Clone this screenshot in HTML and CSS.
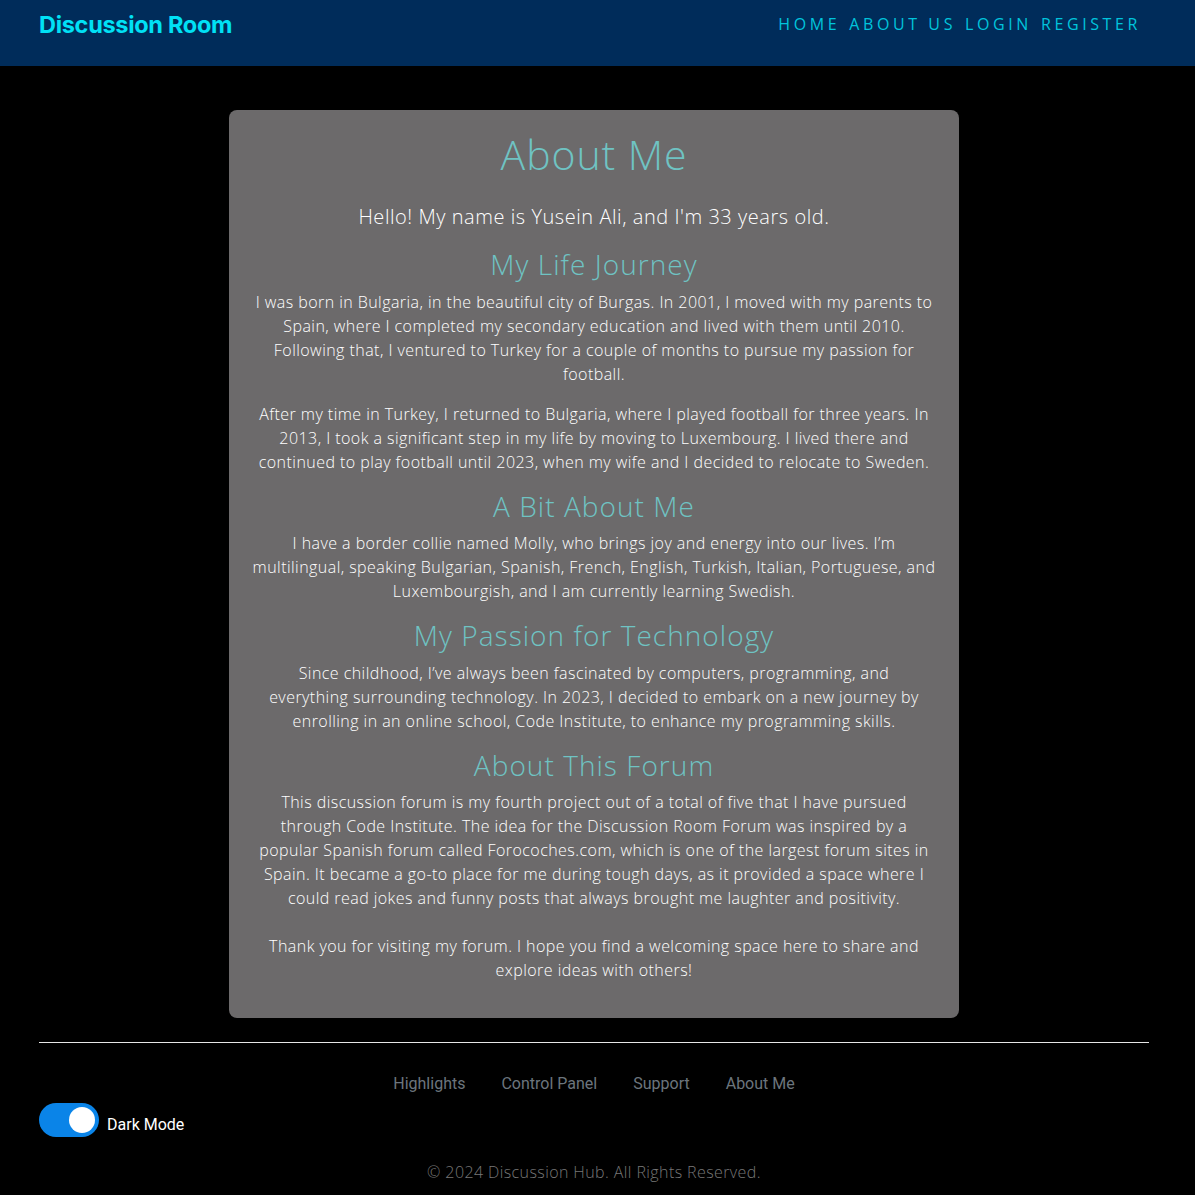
FILE: index.html
```html
<!DOCTYPE html>
<html lang="en">
<head>
<meta charset="utf-8">
<title>About Me - Discussion Room</title>
<link rel="stylesheet" href="styles.css">
</head>
<body>
<header class="topbar">
  <a class="brand" href="#">Discussion Room</a>
  <nav class="mainnav">
    <a href="#">HOME</a>
    <a href="#">ABOUT US</a>
    <a href="#">LOGIN</a>
    <a href="#">REGISTER</a>
  </nav>
</header>
<main class="page">
  <section class="card">
    <h1 class="title">About Me</h1>
    <p class="intro">Hello! My name is Yusein Ali, and I'm 33 years old.</p>
    <h2 class="sub">My Life Journey</h2>
    <p>I was born in Bulgaria, in the beautiful city of Burgas. In 2001, I moved with my parents to Spain, where I completed my secondary education and lived with them until 2010. Following that, I ventured to Turkey for a couple of months to pursue my passion for football.</p>
    <p>After my time in Turkey, I returned to Bulgaria, where I played football for three years. In 2013, I took a significant step in my life by moving to Luxembourg. I lived there and continued to play football until 2023, when my wife and I decided to relocate to Sweden.</p>
    <h2 class="sub">A Bit About Me</h2>
    <p>I have a border collie named Molly, who brings joy and energy into our lives. I’m multilingual, speaking Bulgarian, Spanish, French, English, Turkish, Italian, Portuguese, and Luxembourgish, and I am currently learning Swedish.</p>
    <h2 class="sub">My Passion for Technology</h2>
    <p>Since childhood, I’ve always been fascinated by computers, programming, and<br>everything surrounding technology. In 2023, I decided to embark on a new journey by enrolling in an online school, Code Institute, to enhance my programming skills.</p>
    <h2 class="sub">About This Forum</h2>
    <p>This discussion forum is my fourth project out of a total of five that I have pursued through Code Institute. The idea for the Discussion Room Forum was inspired by a popular Spanish forum called Forocoches.com, which is one of the largest forum sites in Spain. It became a go-to place for me during tough days, as it provided a space where I could read jokes and funny posts that always brought me laughter and positivity.<br><br>Thank you for visiting my forum. I hope you find a welcoming space here to share and explore ideas with others!</p>
  </section>
</main>
<footer class="footer">
  <hr class="rule">
  <ul class="footlinks">
    <li><a href="#">Highlights</a></li>
    <li><a href="#">Control Panel</a></li>
    <li><a href="#">Support</a></li>
    <li><a href="#">About Me</a></li>
  </ul>
  <label class="darkmode">
    <span class="switch"><span class="knob"></span></span>
    <span class="dmlabel">Dark Mode</span>
  </label>
  <p class="copy">© 2024 Discussion Hub. All Rights Reserved.</p>
</footer>
</body>
</html>
```
FILE: styles.css
```css
* { box-sizing: border-box; }
html, body { margin: 0; padding: 0; }
body {
  background: #000;
  font-family: "Open Sans", "Liberation Sans", sans-serif;
  font-weight: 300;
  color: #fff;
}
a { text-decoration: none; }

.topbar {
  height: 66px;
  background: #002c5a;
  display: flex;
  justify-content: space-between;
  align-items: flex-start;
  padding: 0 54px 0 39px;
}
.brand {
  font-family: Inter, "Liberation Sans", sans-serif;
  font-weight: 700;
  font-size: 23.5px;
  letter-spacing: -0.3px;
  color: #00e1f5;
  line-height: 24px;
  margin-top: 13px;
}
.mainnav {
  display: flex;
  gap: 9px;
  margin-top: 13px;
}
.mainnav a {
  color: #00c4dc;
  font-size: 16px;
  font-weight: 400;
  letter-spacing: 3.6px;
  line-height: 22px;
}

.page {
  padding: 44px 7px 24px 0;
  display: flex;
  justify-content: center;
}
.card {
  width: 730px;
  background: #6c6a6b;
  border-radius: 8px;
  padding: 20px 20px 20px;
  text-align: center;
}
.title {
  font-size: 41px;
  font-weight: 300;
  letter-spacing: 0.9px;
  color: #6fc3c3;
  margin: 0 0 24px;
  line-height: 48px;
}
.sub {
  font-size: 28px;
  font-weight: 300;
  letter-spacing: 1.05px;
  color: #6fc3c3;
  margin: 0 0 8px;
  line-height: 33.6px;
}
.card p {
  font-size: 16px;
  letter-spacing: 0.45px;
  line-height: 24px;
  margin: 0 0 16px;
}
.card p.intro {
  font-size: 20px;
  letter-spacing: 0.55px;
  line-height: 30px;
  margin-bottom: 16px;
}

.footer { padding: 0 46px 0 39px; }
.rule {
  border: 0;
  border-top: 1px solid #e6e6e6;
  margin: 0;
}
.footlinks {
  list-style: none;
  display: flex;
  justify-content: center;
  gap: 36px;
  margin: 31px 0 0;
  padding: 0;
  font-family: Roboto, "Liberation Sans", sans-serif;
  font-weight: 400;
  font-size: 16px;
}
.footlinks a { color: #6c757d; }
.darkmode {
  display: flex;
  align-items: center;
  gap: 8px;
  margin-top: 10px;
  font-family: Roboto, "Liberation Sans", sans-serif;
  font-weight: 400;
  font-size: 16px;
}
.switch {
  width: 60px;
  height: 34px;
  border-radius: 17px;
  background: #0a84e8;
  display: flex;
  align-items: center;
  justify-content: flex-end;
  padding: 0 4px;
}
.knob {
  width: 26px;
  height: 26px;
  border-radius: 50%;
  background: #fff;
}
.dmlabel { color: #fff; margin-top: 8px; }
.copy {
  text-align: center;
  color: #777;
  font-size: 16px;
  letter-spacing: 0.4px;
  margin: 23px 0 0;
  line-height: 24px;
}
```
